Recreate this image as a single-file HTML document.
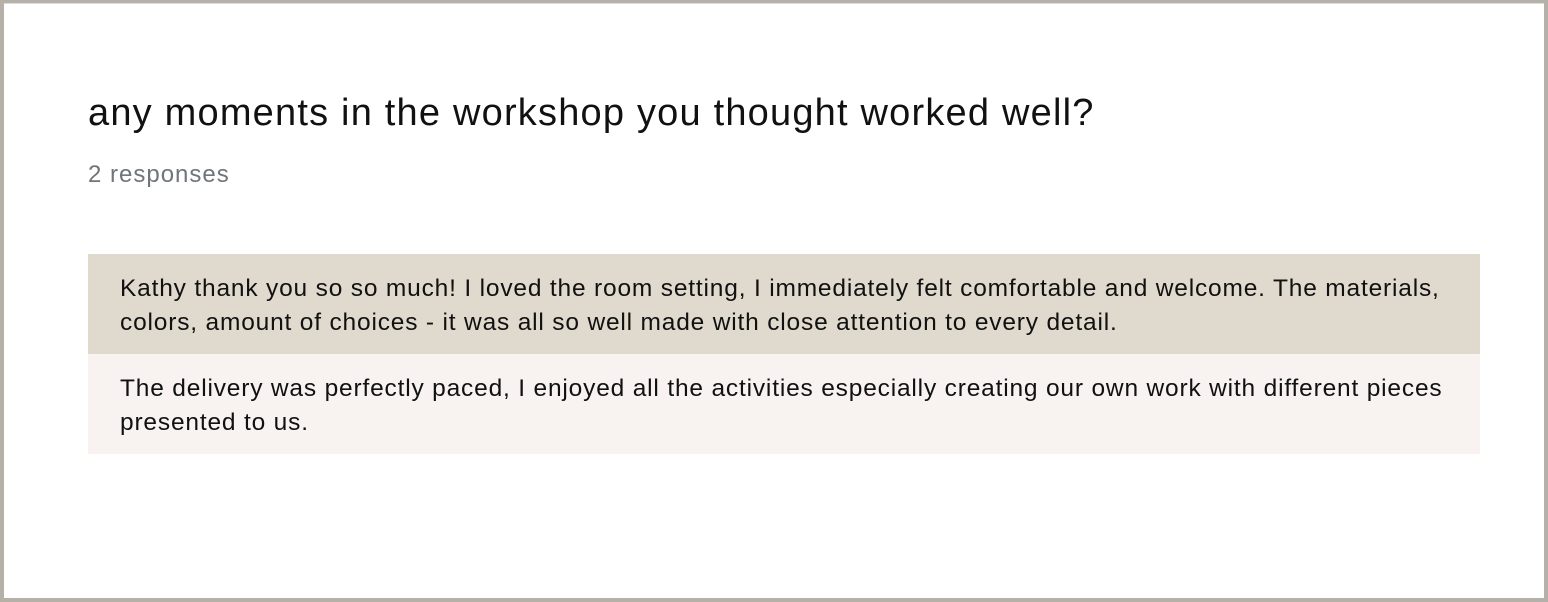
<!DOCTYPE html>
<html><head><style>
html,body{margin:0;padding:0;width:1548px;height:602px;overflow:hidden;background:#b5b0a8;font-family:"Liberation Sans",sans-serif;}
.card{position:absolute;left:4px;top:3px;width:1540px;height:595px;background:#fff;border-top:1px solid #ddd;box-sizing:border-box;}
h1{position:absolute;left:84px;top:88px;margin:0;font-weight:normal;font-size:38px;color:#111;letter-spacing:1.2px;white-space:nowrap;}
.sub{position:absolute;left:84px;top:157px;font-size:24px;color:#70757a;letter-spacing:1px;}
.row{position:absolute;left:84px;width:1392px;height:100px;box-sizing:border-box;padding:18px 32px 14px;font-size:24.5px;line-height:34px;color:#111;letter-spacing:0.82px;white-space:nowrap;}
.r1{top:250px;background:#e0d9cd;}
.r2{top:350px;background:#f8f3f1;}
</style></head><body>
<div class="card">
<h1>any moments in the workshop you thought worked well?</h1>
<div class="sub">2 responses</div>
<div class="row r1">Kathy thank you so so much! I loved the room setting, I immediately felt comfortable and welcome. The materials,<br>colors, amount of choices - it was all so well made with close attention to every detail.</div>
<div class="row r2">The delivery was perfectly paced, I enjoyed all the activities especially creating our own work with different pieces<br>presented to us.</div>
</div>
</body></html>
